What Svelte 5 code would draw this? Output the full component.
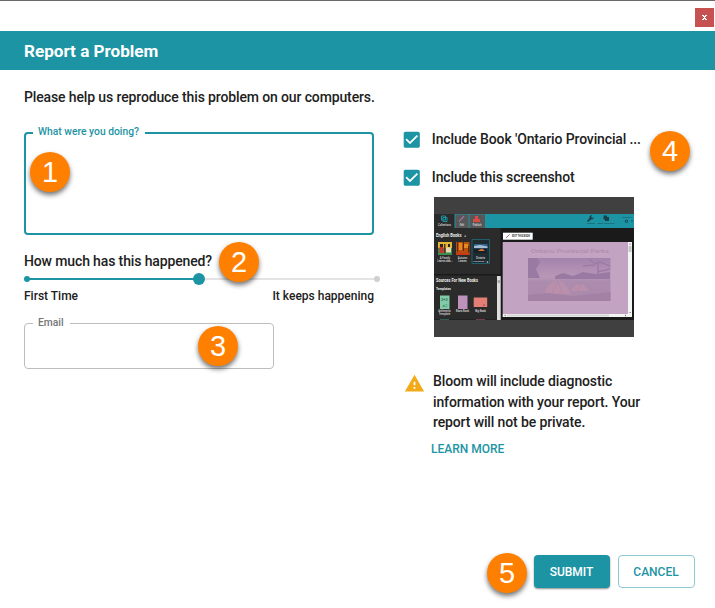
<script>
  let details = $state('');
  let email = $state('');
  const frequency = 49.2;
</script>

{#snippet tick()}
  <svg class="tick" width="21.500" height="21.500" viewBox="0 0 24 24">
    <path fill="#1d94a4" d="M19 3H5c-1.11 0-2 .9-2 2v14c0 1.1.89 2 2 2h14c1.11 0 2-.9 2-2V5c0-1.1-.89-2-2-2zm-9 14l-5-5 1.41-1.41L10 14.17l7.59-7.59L19 8l-9 9z" />
  </svg>
{/snippet}

<div class="window">
  <div class="titlebar"><button class="close" aria-label="Close"><svg width="5" height="5" viewBox="0 0 5 5" shape-rendering="crispEdges"><path fill="#fff" d="M0 0h2v1h1v-1h2v1h-1v1h-1v1h1v1h1v1h-2v-1h-1v1h-2v-1h1v-1h1v-1h-1v-1h-1z" /></svg></button></div>
  <header>Report a Problem</header>
  <main>
    <section class="left">
      <p class="intro">Please help us reproduce this problem on our computers.</p>
      <fieldset class="doing">
        <legend>What were you doing?</legend>
        <textarea aria-label="What were you doing?" bind:value={details}></textarea>
      </fieldset>
      <div class="question">How much has this happened?</div>
      <div class="slider">
        <div class="fill" style="width: {frequency}%"></div>
        <i class="mark start"></i>
        <i class="thumb" style="left: {frequency}%"></i>
        <i class="mark end"></i>
      </div>
      <div class="ends"><span>First Time</span><span>It keeps happening</span></div>
      <fieldset class="email">
        <legend>Email</legend>
        <input aria-label="Email" bind:value={email} />
      </fieldset>
    </section>

    <section class="right">
      <div class="check">{@render tick()}<span>Include Book 'Ontario Provincial ...</span></div>
      <div class="check second">{@render tick()}<span>Include this screenshot</span></div>
      <svg class="shot" width="200" height="140" viewBox="0 0 200 140">
        <defs>
          <linearGradient id="sky" x2="0" y2="1">
            <stop offset="0" stop-color="#8a6a9b" />
            <stop offset=".45" stop-color="#b08fae" />
            <stop offset=".55" stop-color="#9a7a9f" />
            <stop offset="1" stop-color="#987599" />
          </linearGradient>
        </defs>
        <path fill="#404040" d="M0 0h200v140H0z" />
        <path fill="#1d94a4" d="M0 17h200v14H0z" />
        <path fill="#1a1a1a" d="M0 31h200v92H0z" />
        <path fill="#2b2b2b" d="M0 17h20.500v14H66.500v46H0zM0 78.500h63v44H0z" />
        <path fill="#575757" d="M21.500 17.500h13V31h-13zM35.500 17.500h15.500V31H35.500z" />
        <g fill="none" stroke="#1d94a4" stroke-width="1"><path d="M7.500 19h4v4h-4zM9 20.500h4v4H9z" /></g>
        <path stroke="#9b6da0" stroke-width="1.500" d="M25 24.500l5-5.500" />
        <path fill="#d94b43" d="M41 19h3v3h2v3h-7v-3h2z" />
        <g fill="#ddd" font-size="2.600" text-anchor="middle">
          <text x="10.500" y="29">Collections</text><text x="28" y="29">Edit</text><text x="43" y="29">Publish</text>
        </g>
        <g fill="#17404a">
          <path d="M153 24l2.500-3c0-2 1-3 2.500-2.500l-1 1.500 1.500 1 1-1c.4 2-1 2.500-2 2.300L154 25z" />
          <path d="M169.500 18.500h3.500v1.500h2v4h-4v-1.500h-1.500z" />
        </g>
        <circle cx="192.500" cy="24.300" r="1.200" fill="none" stroke="#17404a" />
        <path fill="#17404a" d="M197 23.500h2l-1 1.500z" />
        <g fill="#174d57" font-size="2.300">
          <text x="153" y="27" textLength="8" lengthAdjust="spacingAndGlyphs">Settings</text><text x="163.500" y="27" textLength="17" lengthAdjust="spacingAndGlyphs">Other Collection</text><text x="188.500" y="20.700" textLength="9.500" lengthAdjust="spacingAndGlyphs">English ▾</text>
        </g>

        <g fill="#eee" font-weight="700">
          <text x="2" y="40" font-size="4.600" textLength="25.500" lengthAdjust="spacingAndGlyphs">English Books</text>
          <path d="M30 38.700h2.400l-1.200 1.200z" />
          <text x="2" y="85" font-size="4.600" textLength="42" lengthAdjust="spacingAndGlyphs">Sources For New Books</text>
          <text x="2" y="93" font-size="3.200" textLength="15" lengthAdjust="spacingAndGlyphs">Templates</text>
        </g>
        <path fill="#e0b834" d="M4 45h14v13H4z" />
        <path fill="#3d8c50" d="M4 51h14v7H4z" />
        <path fill="#2c2430" d="M6 47h3v3H6zM14 47h2v3h-2z" />
        <path fill="#c9362c" d="M5.500 50h4v6h-4z" /><path fill="#e8d7b0" d="M12 50.500h5v5h-5z" /><path fill="#5a341f" d="M10 47h1.500v9H10z" />
        <path fill="#b5520e" d="M22 45h13.500v13H22z" />
        <path fill="#e08a22" d="M25 46h3v7h-3zM30 47h4v4h-4z" />
        <path fill="#64240e" d="M23 45h1v10h-1zM29 45h1v9h-1zM34 49h1v8h-1z" /><path fill="#c93a17" d="M22 55.500h13.500V58H22z" />
        <path fill="#202b2f" stroke="#1d7787" stroke-width=".7" d="M38 42.500h17.500v24H38z" />
        <path fill="#35618d" d="M40 47h13.500v9H40z" /><path fill="#a4bed2" d="M40 49l6-1 7.500 1.500v1.500H40z" /><path fill="#152029" d="M40 51.500h13.500V56H40z" /><path fill="#d97430" d="M45 53l3-1.500 3 2.500h-7z" />
        <g fill="#ddd" font-size="2.700" font-weight="500" text-anchor="middle">
          <text x="11" y="62">A Family</text><text x="11" y="65">Learns abo...</text>
          <text x="28.500" y="62">Autumn</text><text x="28.500" y="65">Leaves</text>
          <text x="46.500" y="62">Ontario</text><text x="46" y="65" font-size="2.500">Provincial ...</text>
          <text x="10.500" y="115">Arithmetic</text><text x="10.500" y="118">Template</text>
          <text x="28.500" y="115" font-size="2.600">Basic Book</text><text x="46.500" y="115">Big Book</text>
        </g>
        <path fill="#eee" d="M52.500 64.500h2l-1 1.500z" />
        <path fill="#82cba9" d="M6 98.500h9.500V112H6z" />
        <g fill="#285d48" font-size="4"><text x="7" y="104">2+2</text><text x="8.500" y="109.500">=□</text></g>
        <path fill="#bd93bd" d="M24 98.500h9.500V112H24z" />
        <path fill="#e57f76" d="M39.700 100.500h13.500v9.500H39.700z" /><path fill="#8f4d49" d="M49 107.500h2v1h-2z" />
        <path fill="#315e50" d="M6 122h9v1H6z" /><path fill="#713d42" d="M42 122h9v1h-9z" />
        <path fill="#ddd" d="M63 79h3.700v44H63z" /><path fill="#aaa" d="M63.500 83h2.700v3h-2.700z" />

        <path fill="#fff" d="M69 35.700h29.700v7H69z" />
        <path stroke="#955c9b" stroke-width="1" d="M72 41l3.500-3.500" />
        <text x="78" y="40.400" font-size="3" font-weight="700" fill="#333" textLength="18" lengthAdjust="spacingAndGlyphs">EDIT THIS BOOK</text>
        <path fill="#c3a3c2" d="M68.700 45h125.300v72H68.700z" />
        <text x="97" y="56" font-size="6" font-weight="500" fill="#ae8cac" textLength="78" lengthAdjust="spacingAndGlyphs">Ontario Provincial Parks</text>
        <g opacity=".55">
          <path fill="url(#sky)" d="M94 61h82.500v43H94z" />
          <path fill="#785989" d="M94 61h9l3 4-4 7 4 9H94zM121 79l8-3 10 3 10-4 12 2 15-2v7h-55z" />
          <path fill="none" stroke="#7e5e8d" stroke-width="1.500" d="M155 62l6 5 5-2 10 4M164 64v16M149 69l12-1M163 75l13-3" />
          <path fill="#b28099" d="M111 97c1-9 7-13 13-13s10 6 13 13zM137 94c2-5 5-7 9-7s6 3 9 7z" />
          <path fill="none" stroke="#9b7097" stroke-width=".7" d="M118 96l6-12 4 13M144 94l2-7" />
          <path fill="#8a678e" d="M94 98l20-2 24 3 38.500-4v9H94z" />
        </g>
        <path fill="#f4f4f4" d="M194 45h4v75H68.700v-3H194z" />
        <path fill="#c6c6c6" d="M194.500 49h3v6h-3z" /><path fill="#d6d6d6" d="M73 117.500h102v2H73z" />
        <path fill="#555" d="M195.300 47.500l.8-1.200.8 1.200zM195.300 115l.8 1.200.8-1.200zM71.500 117.500v2l-1.200-1zM191 117.500v2l1.200-1z" />
      </svg>

      <div class="notice">
        <svg width="21" height="21" viewBox="0 0 24 24"><path fill="#f3aa18" d="M1 21h22L12 2 1 21zm12-3h-2v-2h2v2zm0-4h-2v-4h2v4z" /></svg>
        <p>Bloom will include diagnostic information with your report. Your report will not be private.</p>
      </div>
      <button class="learn">LEARN MORE</button>
    </section>
  </main>
  <footer><button class="submit">SUBMIT</button><button class="cancel">CANCEL</button></footer>

  <span class="badge one">1</span>
  <span class="badge two">2</span>
  <span class="badge three">3</span>
  <span class="badge four">4</span>
  <span class="badge five">5</span>
</div>

<style>
  :global(body) { margin: 0; background: #fff; }
  .window {
    position: relative; box-sizing: border-box; width: 715px; height: 608px; overflow: hidden;
    display: flex; flex-direction: column; border-top: 1px solid #696969;
    font-family: Roboto, sans-serif; font-weight: 500; font-size: 14px; color: #212121;
  }
  button { font: inherit; padding: 0; border: 0; background: none; }
  .titlebar { height: 30px; display: flex; justify-content: flex-end; box-sizing: border-box; padding: 7px 1px 0 0; }
  .close { width: 19px; height: 19px; background: #c75050; display: grid; place-items: center; }
  header { height: 39px; background: #1d94a4; color: #fff; font-size: 17.100px; font-weight: 700; line-height: 41px; padding-left: 24px; }
  main { display: flex; gap: 30px; padding-left: 24px; height: 472px; }
  .left { width: 350px; }
  .intro, .question, .check, .notice p { letter-spacing: -.13px; }
  .intro { margin: 17px 0 19px; line-height: 20px; white-space: nowrap; }
  fieldset { margin: 0; min-width: 0; box-sizing: border-box; border-radius: 4px; padding: 0 8px; }
  legend { font-size: 10.300px; line-height: 12px; padding: 0 6px 0 5px; margin-left: 0; white-space: nowrap; }
  .doing { height: 109px; border: 2px solid #1d94a4; padding: 0 7px; color: #1d94a4; }
  .doing legend { line-height: 11px; padding-bottom: 2px; }
  .email { width: 250px; height: 52px; border: 1px solid #bdbdbd; color: #757575; margin-top: 13px; }
  textarea, input { display: block; box-sizing: border-box; width: 100%; border: 0; outline: 0; resize: none; background: transparent; padding: 0; font: inherit; }
  textarea { height: 84px; }
  input { height: 32px; }
  .question { line-height: 20px; margin-top: 16px; }
  .slider { position: relative; height: 2px; width: 350px; margin: 7px 0 0 3px; background: #e4e4e4; }
  .fill { height: 2px; background: #1d94a4; }
  .mark, .thumb { position: absolute; border-radius: 50%; transform: translate(-50%, -50%); top: 1px; }
  .mark { width: 6px; height: 6px; }
  .start { left: 0; background: #1d94a4; }
  .end { left: 100%; background: #cfcfcf; }
  .thumb { width: 12px; height: 12px; background: #1d94a4; }
  .ends { display: flex; justify-content: space-between; font-size: 12px; line-height: 16px; margin-top: 8px; }

  .right { width: 260px; padding-top: 58px; }
  .check { display: flex; align-items: center; height: 22px; gap: 9px; white-space: nowrap; }
  .check .tick { margin-left: -2.700px; position: relative; top: .5px; }
  .second { margin-top: 16px; }
  .shot { display: block; margin: 9px 0 0 30px; font-family: Roboto, sans-serif; }
  .notice { display: flex; margin-top: 34px; gap: 8.500px; }
  .notice svg { margin: 2px 0 0 -.5px; flex: none; }
  .notice p { margin: 0; width: 215px; line-height: 20.500px; }
  .learn { display: block; margin: 8px 0 0 27px; color: #1d94a4; font-size: 12px; line-height: 16px; }
  footer { display: flex; justify-content: flex-end; gap: 8px; padding-right: 20px; margin-top: 13px; font-size: 12px; }
  footer button { height: 33px; border-radius: 4px; box-sizing: border-box; padding-right: 1px; }
  .submit { width: 76px; background: #1d94a4; color: #fff; box-shadow: 0 1px 2px rgba(0,0,0,.45); }
  .cancel { width: 77px; color: #1d94a4; border: 1px solid #8ecad1; }
  .badge {
    position: absolute; width: 40px; height: 40px; border-radius: 50%; background: #ff8000; color: #fff;
    font: 400 29px/41px "Liberation Sans", Arial, sans-serif; text-align: center; box-shadow: 0 3px 5px rgba(0,0,0,.55);
  }
  .one { left: 30px; top: 151px; }
  .two { left: 219px; top: 241px; }
  .three { left: 198px; top: 325px; }
  .four { left: 650px; top: 130px; }
  .five { left: 487px; top: 552px; }
</style>
